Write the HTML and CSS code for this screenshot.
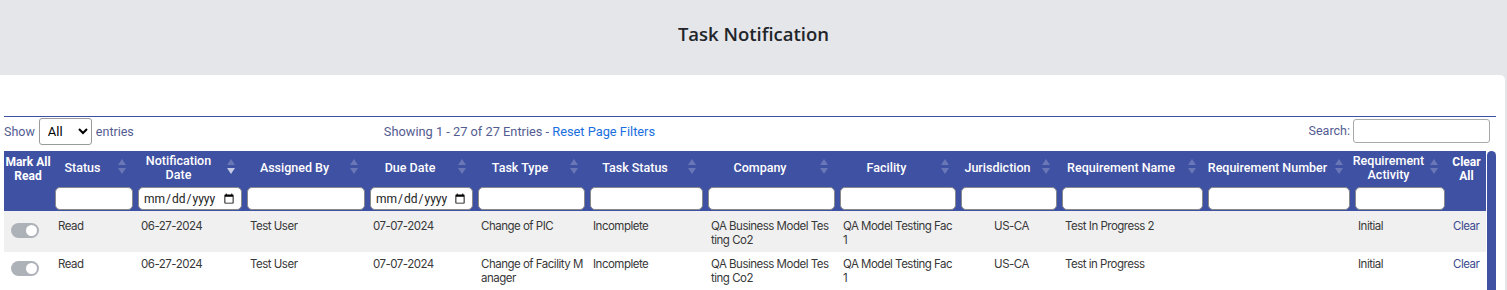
FILE: index.html
```html
<!DOCTYPE html>
<html lang="en">
<head>
    <meta charset="UTF-8">
    <meta name="viewport" content="width=device-width, initial-scale=1.0">
    <title>Task Notification</title>
    <link rel="stylesheet" href="styles.css">
</head>
<body>
    <!-- Page Heading -->
    <header class="page-header">
        <h1 class="page-title">Task Notification</h1>
    </header>

    <!-- Card -->
    <main class="card">
        <div class="toolbar">
            <div class="length">
                Show
                <select class="length-select">
                    <option>All</option>
                </select>
                entries
            </div>
            <div class="info">Showing 1 - 27 of 27 Entries - <a href="#" class="reset-link">Reset Page Filters</a></div>
            <label class="search">Search: <input type="text" class="search-input"></label>
        </div>

        <div class="table-wrap">
            <table class="task-table">
                <colgroup>
                    <col style="width:48px">
                    <col style="width:83px">
                    <col style="width:109px">
                    <col style="width:123px">
                    <col style="width:108px">
                    <col style="width:112px">
                    <col style="width:118px">
                    <col style="width:132px">
                    <col style="width:121px">
                    <col style="width:101px">
                    <col style="width:146px">
                    <col style="width:147px">
                    <col style="width:95px">
                    <col style="width:39px">
                </colgroup>
                <thead>
                    <tr class="label-row">
                        <th class="plain">Mark All Read</th>
                        <th class="sort">Status</th>
                        <th class="sort desc">Notification Date</th>
                        <th class="sort">Assigned By</th>
                        <th class="sort">Due Date</th>
                        <th class="sort">Task Type</th>
                        <th class="sort">Task Status</th>
                        <th class="sort">Company</th>
                        <th class="sort">Facility</th>
                        <th class="sort">Jurisdiction</th>
                        <th class="sort">Requirement Name</th>
                        <th class="sort">Requirement Number</th>
                        <th class="sort">Requirement Activity</th>
                        <th class="plain">Clear All</th>
                    </tr>
                    <tr class="filter-row">
                        <th></th>
                        <th><input type="text" class="filter"></th>
                        <th><input type="date" class="filter"></th>
                        <th><input type="text" class="filter"></th>
                        <th><input type="date" class="filter"></th>
                        <th><input type="text" class="filter"></th>
                        <th><input type="text" class="filter"></th>
                        <th><input type="text" class="filter"></th>
                        <th><input type="text" class="filter"></th>
                        <th><input type="text" class="filter"></th>
                        <th><input type="text" class="filter"></th>
                        <th><input type="text" class="filter"></th>
                        <th><input type="text" class="filter"></th>
                        <th></th>
                    </tr>
                </thead>
                <tbody>
                    <tr class="odd">
                        <td><span class="toggle"></span></td>
                        <td>Read</td>
                        <td>06-27-2024</td>
                        <td>Test User</td>
                        <td>07-07-2024</td>
                        <td>Change of PIC</td>
                        <td>Incomplete</td>
                        <td class="company">QA Business Model Testing Co2</td>
                        <td>QA Model Testing Fac 1</td>
                        <td class="center">US-CA</td>
                        <td>Test In Progress 2</td>
                        <td></td>
                        <td>Initial</td>
                        <td><a href="#" class="clear-link">Clear</a></td>
                    </tr>
                    <tr>
                        <td><span class="toggle"></span></td>
                        <td>Read</td>
                        <td>06-27-2024</td>
                        <td>Test User</td>
                        <td>07-07-2024</td>
                        <td>Change of Facility Manager</td>
                        <td>Incomplete</td>
                        <td class="company">QA Business Model Testing Co2</td>
                        <td>QA Model Testing Fac 1</td>
                        <td class="center">US-CA</td>
                        <td>Test in Progress</td>
                        <td></td>
                        <td>Initial</td>
                        <td><a href="#" class="clear-link">Clear</a></td>
                    </tr>
                </tbody>
            </table>
            <div class="scroll-bar"></div>
        </div>
    </main>
</body>
</html>
```

FILE: styles.css
```css
/* General Styling */
body {
    margin: 0;
    padding: 0;
    background-color: #e5e6ea;
    font-family: 'Roboto', sans-serif;
    height: 290px;
    overflow: hidden;
    display: flex;
    flex-direction: column;
}

/* Heading */
.page-header {
    height: 75px;
    flex-shrink: 0;
    display: flex;
    align-items: center;
    justify-content: center;
}

.page-title {
    margin: 0 0 9px 0;
    font-family: 'Open Sans', sans-serif;
    font-size: 18.5px;
    font-weight: 600;
    color: #212529;
}

/* Card */
.card {
    flex: 1;
    background-color: #ffffff;
    margin-right: 2px;
    border-top-right-radius: 5px;
    padding: 41px 9px 0 4px;
}

/* Top controls */
.toolbar {
    border-top: 1px solid #3f51a3;
    display: flex;
    align-items: flex-start;
    height: 29px;
    padding-top: 1px;
    margin-bottom: 4px;
    font-size: 12.5px;
    color: #535c91;
}

.length {
    display: flex;
    align-items: center;
    height: 27px;
}

.length-select {
    width: 53px;
    height: 27px;
    margin: 0 4px;
    padding: 0 4px;
    font-family: 'Roboto', sans-serif;
    font-size: 13px;
    color: #000;
    border: 1px solid #9a9a9a;
    border-radius: 3px;
    background: #fff;
}

.info {
    margin-left: 250px;
    line-height: 27px;
    font-size: 12.8px;
}

.reset-link {
    color: #1a6fe0;
    text-decoration: none;
}

.search {
    margin-left: auto;
    margin-right: 6px;
    display: flex;
    align-items: center;
    height: 25px;
}

.search-input {
    width: 137px;
    height: 24px;
    box-sizing: border-box;
    margin-left: 3px;
    border: 1px solid #a8a8a8;
    border-radius: 3px;
}

/* Table */
.table-wrap {
    display: flex;
    align-items: stretch;
    gap: 1px;
}

.task-table {
    width: 1482px;
    table-layout: fixed;
    border-collapse: collapse;
    border-spacing: 0;
}

.task-table thead {
    background-color: #3f51a3;
    color: #ffffff;
}

.label-row th {
    height: 32px;
    padding: 0 22px 0 0;
    font-size: 12.5px;
    font-weight: 500;
    line-height: 14px;
    text-align: center;
    vertical-align: middle;
    position: relative;
}

.label-row th.plain {
    padding: 2px 0 0 0;
    font-weight: 700;
    font-size: 12px;
}

/* Sort arrows */
.sort::before,
.sort::after {
    content: "";
    position: absolute;
    right: 9px;
    border-left: 4px solid transparent;
    border-right: 4px solid transparent;
}

.sort::before {
    top: 8px;
    border-bottom: 6px solid rgba(255, 255, 255, 0.22);
}

.sort::after {
    top: 17px;
    border-top: 6px solid rgba(255, 255, 255, 0.22);
}

.sort.desc::after {
    border-top-color: rgba(255, 255, 255, 0.7);
}

.filter-row th {
    height: 26px;
    padding: 2px 2px 1px 3px;
    box-sizing: border-box;
}

.filter {
    display: block;
    width: 100%;
    height: 23px;
    box-sizing: border-box;
    margin: 0;
    padding: 0 4px;
    border: 1px solid #8a8a8a;
    border-radius: 5px;
    background: #ffffff;
    font-family: 'Roboto', sans-serif;
    font-size: 12px;
    color: #222;
}

.task-table td {
    padding: 5px 0 5px 6px;
    vertical-align: top;
    font-family: 'Inter', sans-serif;
    font-size: 11.5px;
    letter-spacing: -0.5px;
    line-height: 14px;
    color: #383838;
    word-break: break-all;
}

.task-table tr.odd td {
    background-color: #f0f0f0;
    padding-top: 8px;
}

.task-table td.company {
    padding-right: 8px;
}

.task-table td.center {
    text-align: center;
}

.clear-link {
    color: #3d4a8f;
    text-decoration: none;
}

/* Read toggle */
.toggle {
    display: block;
    position: relative;
    width: 28px;
    height: 15px;
    margin: 4px 0 0 1px;
    border-radius: 8px;
    background-color: #adb1b8;
}

.toggle::after {
    content: "";
    position: absolute;
    top: 2px;
    right: 2px;
    width: 11px;
    height: 11px;
    border-radius: 50%;
    background-color: #ffffff;
}

/* Custom scrollbar */
.scroll-bar {
    width: 9px;
    background-color: #3f51a3;
    border-radius: 5px 5px 0 0;
}
```
